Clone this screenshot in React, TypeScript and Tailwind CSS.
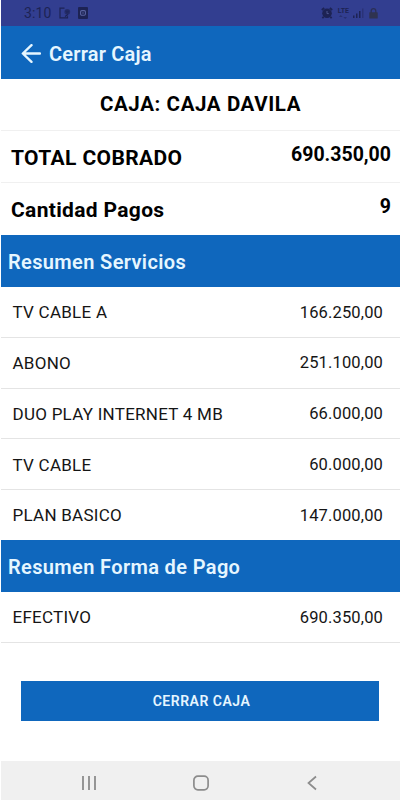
interface Item {
  label: string;
  amount: string;
}

const services: Item[] = [
  { label: "TV CABLE A", amount: "166.250,00" },
  { label: "ABONO", amount: "251.100,00" },
  { label: "DUO PLAY INTERNET 4 MB", amount: "66.000,00" },
  { label: "TV CABLE", amount: "60.000,00" },
  { label: "PLAN BASICO", amount: "147.000,00" },
];

const payments: Item[] = [{ label: "EFECTIVO", amount: "690.350,00" }];

function StatusBar() {
  return (
    <div className="flex h-[26px] shrink-0 items-center bg-[#323e90] pr-[22px] pl-[23px] text-[#1d2354]">
      <span className="text-[14px] leading-none tracking-[0.1px]">3:10</span>
      <svg className="ml-[8px] h-3 w-3" viewBox="0 0 12 12" fill="none" stroke="currentColor" strokeWidth="1.2">
        <path d="M5.5 1.2H1v9.6h7.5V9.2M6 9.5 9 7.5" />
        <circle cx="8.3" cy="4.8" r="2.9" fill="currentColor" fillOpacity="0.6" stroke="none" />
        <path d="M6.5 4.2h3.6M7 5.8h2.6" strokeWidth="0.8" />
      </svg>
      <svg className="ml-[7px] h-3 w-[10px]" viewBox="0 0 10 12">
        <rect width="10" height="12" rx="1" fill="currentColor" />
        <rect x="2.6" y="3.6" width="4.8" height="4.6" rx="1.2" fill="none" stroke="#59639f" strokeWidth="1.1" />
        <path d="M4 6h2" stroke="#59639f" strokeWidth="0.8" />
      </svg>
      <div className="ml-auto flex items-center">
        <svg className="h-3 w-3" viewBox="0 0 12 12" fill="none" stroke="currentColor">
          <circle cx="6" cy="6.3" r="4.8" fill="currentColor" stroke="none" />
          <path d="M0.8 3 3.2 1M11.2 3 8.8 1M2.6 9.8 1.4 11.3M9.4 9.8l1.2 1.5" strokeWidth="1.8" />
          <path d="M6 4v2.6h1.8" stroke="#505a94" strokeWidth="0.9" />
        </svg>
        <div className="ml-[5px] flex flex-col items-center">
          <span className="text-[7px] leading-[7px] font-bold">LTE</span>
          <svg className="h-[4px] w-[8px]" viewBox="0 0 8 4" fill="currentColor" opacity="0.5">
            <path d="M0 2h3.6L1.8 0zM4.4 2H8L6.2 4z" />
          </svg>
        </div>
        <svg className="ml-[4px] h-[10px] w-[11px]" viewBox="0 0 11 10" fill="currentColor">
          <path d="M0 7.5h1.5V10H0zM3 5.5h1.5V10H3zM6 3h1.5v7H6z" />
          <path d="M9 0.5h1.5V10H9z" opacity="0.4" />
        </svg>
        <svg className="ml-[5px] h-[11px] w-[9px]" viewBox="0 0 9 11" fill="none">
          <path d="M2.2 5V3a2.3 2.3 0 0 1 4.6 0v2" stroke="#2b3057" strokeWidth="1.3" />
          <rect x="0.3" y="4.2" width="8.4" height="6.3" rx="0.6" fill="#2f3350" />
        </svg>
      </div>
    </div>
  );
}

function SectionTitle({ title }: { title: string }) {
  return (
    <h2 className="flex h-[52px] shrink-0 items-center bg-[#0f67bd] pt-[2px] pl-[7px] text-[20px] font-semibold tracking-[0.36px] text-[#e6f6ff]">
      {title}
    </h2>
  );
}

function ItemRow({ label, amount }: Item) {
  return (
    <li className="flex flex-1 items-center justify-between border-b border-[#e4e4e4] pt-[2px] pr-[17px] pl-[11.5px] text-[#151515] last:border-b-0">
      <span className="text-[17px] tracking-[0.26px]">{label}</span>
      <span className="text-[16.5px] tracking-[0.15px]">{amount}</span>
    </li>
  );
}

export default function App() {
  return (
    <div className="flex h-[800px] w-[400px] flex-col overflow-hidden bg-white pl-px font-['Roboto',sans-serif]">
      <StatusBar />
      <header className="flex h-[53px] shrink-0 items-center bg-[#0f67bd] pt-[2px] pl-[20px] text-[#e6f6ff]">
        <svg className="h-5 w-5" viewBox="0 0 20 20" fill="none" stroke="currentColor" strokeWidth="2.4" strokeLinecap="round" strokeLinejoin="round">
          <path d="M19 9.5H2M10.5 1.2 1.8 9.5l8.7 8.3" />
        </svg>
        <h1 className="ml-[8px] text-[20px] font-semibold tracking-[0.2px]">Cerrar Caja</h1>
      </header>

      <div className="flex h-[52px] shrink-0 items-center justify-center border-b border-[#f0f0f0] pb-px text-[20.5px] font-bold tracking-[0.6px] text-black">
        CAJA: CAJA DAVILA
      </div>
      <div className="flex h-[52px] shrink-0 justify-between border-b border-[#f0f0f0] pr-[9px] pl-[10px] font-bold text-black">
        <span className="pt-[12px] text-[21px] tracking-[0.38px]">TOTAL COBRADO</span>
        <span className="pt-[9px] text-[19.5px]">690.350,00</span>
      </div>
      <div className="flex h-[52px] shrink-0 justify-between pr-[9px] pl-[10px] font-bold text-black">
        <span className="pt-[12px] text-[21px] tracking-[0.33px]">Cantidad Pagos</span>
        <span className="pt-[9px] text-[19.5px]">9</span>
      </div>

      <SectionTitle title="Resumen Servicios" />
      <ul className="flex h-[253px] shrink-0 flex-col">
        {services.map((item) => (
          <ItemRow key={item.label} {...item} />
        ))}
      </ul>

      <SectionTitle title="Resumen Forma de Pago" />
      <ul className="flex h-[50px] shrink-0 flex-col">
        {payments.map((item) => (
          <ItemRow key={item.label} {...item} />
        ))}
      </ul>

      <div className="border-t border-[#e4e4e4] pt-[38px] pr-[21px] pl-[20px]">
        <button type="button" className="h-10 w-full bg-[#0f67bd] pt-px pl-[3px] text-[14px] font-semibold tracking-[0.5px] text-[#e6f6ff]">
          CERRAR CAJA
        </button>
      </div>

      <nav className="mt-auto flex h-[39px] shrink-0 items-center bg-[#f0f0f0] pt-[5px] pl-[80px] text-[#8c8c8c]">
        <svg className="h-4 w-4" viewBox="0 0 16 16" fill="none" stroke="currentColor" strokeWidth="1.8">
          <path d="M2 1v14M8 1v14M14 1v14" />
        </svg>
        <svg className="ml-[96px] h-4 w-4" viewBox="0 0 16 16" fill="none" stroke="currentColor" strokeWidth="1.7">
          <rect x="0.9" y="1.2" width="14.2" height="13.6" rx="4" />
        </svg>
        <svg className="ml-[97px] h-4 w-4" viewBox="0 0 16 16" fill="none" stroke="currentColor" strokeWidth="1.7">
          <path d="M10 1.5 2.5 8l7.5 6.5" />
        </svg>
      </nav>
    </div>
  );
}
